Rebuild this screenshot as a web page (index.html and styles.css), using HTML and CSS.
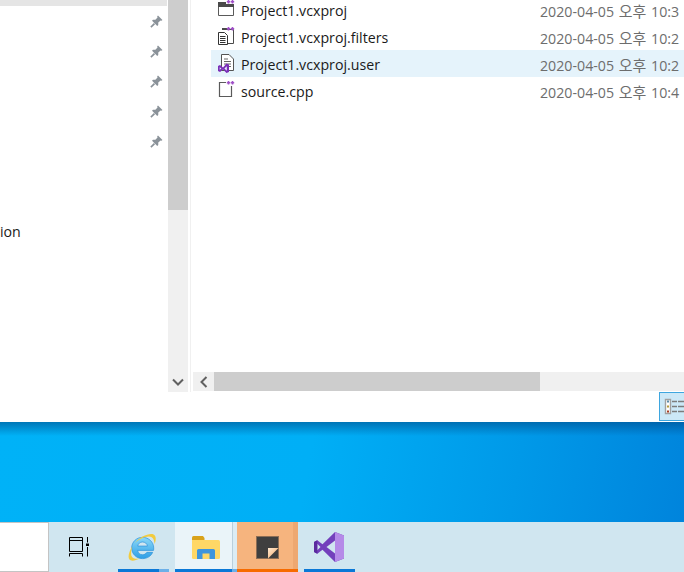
FILE: index.html
```
<!DOCTYPE html>
<html lang="ko">
<head>
<meta charset="utf-8">
<title>Explorer</title>
<link rel="stylesheet" href="styles.css">
</head>
<body>
<svg class="defs" width="0" height="0" aria-hidden="true">
  <defs>
    <symbol id="pin" viewBox="0 0 14 14">
      <path d="M8.6 .6 13.4 5.4 12.4 6.3 11.4 5.9 8.9 8.2 8.9 10.8 7.8 11.8 2.2 6.2 3.2 5.1 5.8 5.1 8.1 2.6 7.7 1.5Z" fill="#8a9299"/>
      <path d="M4.8 9.2 1 13" stroke="#8a9299" stroke-width="1.8"/>
    </symbol>
    <symbol id="plus" viewBox="0 0 18 19">
      <path d="M11.500 0V3.500M9.800 1.700H13.200M15.500 0V3.500M13.800 1.700H17.200" stroke="#a050c8" stroke-width="1.600" fill="none"/>
    </symbol>
  </defs>
</svg>
<div class="window">
  <div class="main">
    <aside class="nav">
      <div class="nav-list">
        <div class="nav-selected"></div>
        <div class="pin-row"><svg class="pin"><use href="#pin"/></svg></div>
        <div class="pin-row"><svg class="pin"><use href="#pin"/></svg></div>
        <div class="pin-row"><svg class="pin"><use href="#pin"/></svg></div>
        <div class="pin-row"><svg class="pin"><use href="#pin"/></svg></div>
        <div class="pin-row"><svg class="pin"><use href="#pin"/></svg></div>
        <div class="nav-text">ion</div>
      </div>
      <div class="vscroll">
        <div class="vthumb"></div>
        <div class="vbtn">
          <svg width="12" height="8" viewBox="0 0 12 8"><path d="M1 1.500 6 6.500 11 1.500" fill="none" stroke="#606060" stroke-width="2"/></svg>
        </div>
      </div>
    </aside>
    <section class="content">
      <div class="files">
        <div class="row">
          <svg class="ficon" viewBox="0 0 18 19">
            <path d="M1.500 5.500H16.500V15.500H1.500Z" fill="#fff" stroke="#5a5a5a"/>
            <path d="M1 2H9V4H17V7H1Z" fill="#4a4a4a"/>
            <use href="#plus"/>
          </svg>
          <span class="fname">Project1.vcxproj</span>
          <span class="fdate">2020-04-05 <span class="ko">오후</span> 10:3</span>
        </div>
        <div class="row">
          <svg class="ficon" viewBox="0 0 18 19">
            <path d="M5.500 2.500H16.500V16.500H11" fill="#fff" stroke="#4a4a4a"/>
            <path d="M5 1H10V3H5Z" fill="#4a4a4a"/>
            <path d="M1.500 5.500H7.500L10.500 8.500V17.500H1.500Z" fill="#fff" stroke="#333"/>
            <path d="M3 9.500H8.500M3 11.500H8.500M3 13.500H8.500M3 15.500H8.500" stroke="#333"/>
            <use href="#plus"/>
          </svg>
          <span class="fname">Project1.vcxproj.filters</span>
          <span class="fdate">2020-04-05 <span class="ko">오후</span> 10:2</span>
        </div>
        <div class="row row-hover">
          <svg class="ficon" viewBox="0 0 18 19">
            <path d="M4.500 .5H12L16.500 5V16.500H4.500Z" fill="#fff" stroke="#555"/>
            <path d="M7 5H11M7 7.500H14M7 10H14M9 12.500H14" stroke="#666"/>
            <path d="M1 12 3 11 6 13.500 9.500 9.500 12 10.500V18L9.500 19 6 15.500 3 18 1 17Z" fill="#7a2fb8"/>
            <path d="M2.700 13.200V15.800L4.400 14.500ZM9.800 12.300 7.400 14.500 9.800 16.700Z" fill="#e5f3fb"/>
          </svg>
          <span class="fname">Project1.vcxproj.user</span>
          <span class="fdate">2020-04-05 <span class="ko">오후</span> 10:2</span>
        </div>
        <div class="row">
          <svg class="ficon" viewBox="0 0 18 19">
            <path d="M9 1.500H2.500V15.500H14.500V5" fill="#fff" stroke="#5a5a5a" stroke-width="1.200"/>
            <use href="#plus"/>
          </svg>
          <span class="fname">source.cpp</span>
          <span class="fdate">2020-04-05 <span class="ko">오후</span> 10:4</span>
        </div>
      </div>
      <div class="hscroll">
        <div class="hbtn">
          <svg width="8" height="12" viewBox="0 0 8 12"><path d="M6.500 1 1.500 6 6.500 11" fill="none" stroke="#606060" stroke-width="2"/></svg>
        </div>
        <div class="hthumb"></div>
      </div>
    </section>
  </div>
  <div class="status">
    <div class="viewbtn">
      <svg width="25" height="17" viewBox="0 0 25 17">
        <path d="M1.500 1.500H6.500V15.500H1.500Z" fill="#fff" stroke="#a0a0a0" stroke-width="1.400"/>
        <path d="M3 2.500H5V4.500H3Z" fill="#5a8aa8"/>
        <path d="M3 7.500H5V9.500H3Z" fill="#b49a3c"/>
        <path d="M3 12.500H5V14.500H3Z" fill="#a83a22"/>
        <path d="M8 3.500H13M14 3.500H20M8 8.500H13M14 8.500H20M8 13.500H13M14 13.500H20" stroke="#7c7c7c" stroke-width="1.300"/>
      </svg>
    </div>
  </div>
</div>
<div class="desktop"></div>
<footer class="taskbar">
  <div class="search"></div>
  <div class="tb-item tb-view">
    <div class="tb-icon">
      <svg width="21" height="20" viewBox="0 0 21 20">
        <path d="M.5 .5H13.500M.5 .5V4M13.500 .5V4M.5 3.500H13.500V14.500H.5V3.500M.5 16.500H13.500M.5 16.500V19.500M13.500 16.500V19.500M18.500 0V5.500M18.500 10V19.500" fill="none" stroke="#000"/>
        <rect x="17" y="6.500" width="3" height="2.500" fill="#000"/>
      </svg>
    </div>
  </div>
  <div class="tb-item tb-ie">
    <div class="tb-icon">
      <svg width="29" height="29" viewBox="0 0 30 30">
        <defs>
          <linearGradient id="ieg" x1="0" y1="0" x2="0" y2="1">
            <stop offset="0" stop-color="#8ad8f8"/>
            <stop offset="1" stop-color="#2f9fe6"/>
          </linearGradient>
        </defs>
        <path d="M15 4.500C8.800 4.500 3.800 9.300 3.800 15.500S8.800 26.500 15 26.500C19.800 26.500 23.800 24 25.500 20H19.500C18.400 21.800 16.800 22.500 15 22.500 12.300 22.500 10.300 20.700 10 18H26.400C26.600 17 26.600 16.300 26.600 15.500 26.600 9.300 21.300 4.500 15 4.500ZM10.100 13.500C10.500 10.900 12.400 9.300 15 9.300S19.700 10.900 20.100 13.500Z" fill="url(#ieg)" stroke="#2a90d8" stroke-width=".7"/>
        <path d="M7 10.500C12 4 22 -.5 26.500 1.500 29.500 3 29 8 27.500 11.500 27.300 6.500 25.500 3.500 21.500 3.500 17 3.500 11 6.500 7 10.500ZM4.500 13.500C1 19.500 -.5 25 1.500 27.500 3.500 29.500 8 28.500 12 26.500 8.500 27 4.500 26.500 3.500 23.500 2.800 20.500 3.500 17 4.500 13.500Z" fill="#f2cb3f"/>
      </svg>
    </div>
    <div class="tb-bar tb-bar-ie"></div>
  </div>
  <div class="tb-item tb-folder">
    <div class="tb-icon">
      <svg width="28" height="23" viewBox="0 0 28 23">
        <path d="M0 1.500Q0 0 1.500 0H11L12.500 2V5H0Z" fill="#d9a21b"/>
        <path d="M0 4H26.500Q28 4 28 5.500V21.500Q28 23 26.500 23H1.500Q0 23 0 21.500Z" fill="#ffd766"/>
        <path d="M5 23V14.500Q5 13 6.500 13H21.500Q23 13 23 14.500V23H17.500V17.500H10.500V23Z" fill="#3f95dc"/>
      </svg>
    </div>
    <div class="tb-bar tb-bar-folder"></div>
  </div>
  <div class="tb-item tb-sticky">
    <div class="tb-icon">
      <svg width="23" height="23" viewBox="0 0 23 23">
        <defs>
          <linearGradient id="stg" x1="0" y1="0" x2="1" y2="1">
            <stop offset="0" stop-color="#fde9d2"/>
            <stop offset="1" stop-color="#f6a866"/>
          </linearGradient>
        </defs>
        <rect x=".5" y=".5" width="22" height="22" fill="#3f3f3f" stroke="#8c6d55"/>
        <path d="M12 12H22.500L12 22.500Z" fill="url(#stg)"/>
      </svg>
    </div>
    <div class="tb-bar tb-bar-sticky"></div>
  </div>
  <div class="tb-item tb-vs">
    <div class="tb-icon">
      <svg width="30" height="30" viewBox="0 0 30 30">
        <path d="M21 0 30 3.500V26.500L21 30 8.500 17.800 3.300 21.700 0 20V10L3.300 8.300 8.500 12.200Z" fill="#7340bc"/>
        <path d="M21 0 30 3.500V26.500L21 30Z" fill="#b58ae8"/>
        <path d="M21 8.500 12.500 15 21 21.500Z" fill="#d0e6f0"/>
        <path d="M3.300 11.800V18.200L6.500 15Z" fill="#d0e6f0"/>
        <path d="M0 10 3.300 8.300V21.700L0 20Z" fill="#5b2a9e"/>
      </svg>
    </div>
    <div class="tb-bar tb-bar-vs"></div>
  </div>
</footer>
</body>
</html>
```
FILE: styles.css
```
html, body {
  margin: 0;
  padding: 0;
}
body {
  width: 684px;
  height: 572px;
  overflow: hidden;
  background: #fff;
  font-family: "Open Sans", "Noto Sans CJK KR", sans-serif;
}
.defs {
  display: block;
  height: 0;
}
.window {
  height: 422px;
  display: flex;
  flex-direction: column;
  background: #fff;
}
.main {
  height: 392px;
  flex: none;
  display: flex;
}
.nav {
  width: 191px;
  flex: none;
  box-sizing: border-box;
  display: flex;
  border-right: 1px solid #f0f0f0;
}
.nav-list {
  width: 168px;
  flex: none;
}
.nav-selected {
  width: 167px;
  height: 6px;
  background: #e5e5e5;
}
.pin-row {
  height: 30px;
  display: flex;
  align-items: center;
  justify-content: flex-end;
  padding-right: 5px;
}
.pin {
  width: 13px;
  height: 13px;
}
.pin-row:first-of-type {
  margin-top: 1px;
}
.nav-text {
  margin-top: 66px;
  height: 20px;
  font-size: 14.2px;
  line-height: 20px;
  color: #1a1a1a;
}
.vscroll {
  width: 20px;
  flex: none;
  display: flex;
  flex-direction: column;
  justify-content: space-between;
  background: #f0f0f0;
}
.vthumb {
  height: 210px;
  background: #cdcdcd;
}
.vbtn {
  height: 20px;
  display: flex;
  align-items: center;
  justify-content: center;
}
.content {
  flex: 1;
  min-width: 0;
  display: flex;
  flex-direction: column;
  padding: 0 0 1px 2px;
}
.files {
  flex: 1;
  min-height: 0;
  overflow: hidden;
  padding-left: 18px;
}
.row {
  height: 27px;
  display: flex;
  align-items: center;
  white-space: nowrap;
}
.row:first-child {
  margin-top: -4px;
}
.row-hover {
  background: #e5f3fb;
}
.ficon {
  margin-left: 6px;
  width: 18px;
  height: 19px;
  flex: none;
  overflow: visible;
}
.fname {
  margin-left: 6px;
  padding-top: 2px;
  width: 299px;
  flex: none;
  font-size: 14.2px;
  color: #1a1a1a;
}
.fdate {
  padding-top: 2px;
  font-size: 14.2px;
  word-spacing: 1px;
  color: #6d6d6d;
}
.ko {
  font-size: 15px;
}
.hscroll {
  height: 19px;
  flex: none;
  display: flex;
  background: #f0f0f0;
}
.hbtn {
  width: 21px;
  display: flex;
  align-items: center;
  justify-content: center;
}
.hthumb {
  width: 326px;
  background: #cdcdcd;
}
.status {
  flex: 1;
  display: flex;
  justify-content: flex-end;
}
.viewbtn {
  width: 25px;
  margin-bottom: 1px;
  box-sizing: border-box;
  background: #cce8f7;
  border: 1px solid #3ea6df;
  border-right: 0;
  display: flex;
  align-items: center;
  padding-left: 4px;
  overflow: hidden;
}
.viewbtn svg {
  flex: none;
}
.desktop {
  height: 100px;
  background:
    linear-gradient(180deg, rgba(0, 70, 130, .55) 0, rgba(0, 70, 130, 0) 14px),
    linear-gradient(100deg, #00b2f7 0, #00aff6 45%, #0099e8 75%, #0084dc 100%);
}
.taskbar {
  height: 50px;
  display: flex;
  background: #d0e6f0;
}
.search {
  width: 49px;
  box-sizing: border-box;
  background: #fff;
  border: 1px solid #c4c4c4;
  border-width: 1px 1px 1px 0;
  flex: none;
}
.tb-item {
  flex: none;
  display: flex;
  flex-direction: column;
  box-sizing: border-box;
  height: 50px;
}
.tb-icon {
  height: 47px;
  flex: none;
  display: flex;
  align-items: center;
  justify-content: center;
  padding-top: 3px;
  box-sizing: border-box;
}
.tb-bar {
  height: 3px;
  flex: none;
}
.tb-view {
  width: 61px;
  padding-left: 0;
}
.tb-ie {
  width: 65px;
}
.tb-folder {
  width: 62px;
  background: linear-gradient(90deg, #eaf4f9 0, #eaf4f9 57px, #b9cfdb 57px, #b9cfdb 58px, #dbecf4 58px);
}
.tb-sticky {
  width: 61px;
  background: linear-gradient(90deg, #f6b47e 0, #f6b47e 56px, #eea871 56px);
}
.tb-vs {
  width: 62px;
}
.tb-bar-ie {
  margin: 0 6px 0 8px;
  background: linear-gradient(90deg, #0a78d7 0, #0a78d7 41px, #6cb0e8 41px);
}
.tb-bar-folder {
  background: linear-gradient(90deg, #0a78d7 0, #0a78d7 57px, #6cb0e8 57px);
}
.tb-bar-sticky {
  background: #f76b00;
}
.tb-bar-vs {
  margin: 0 5px 0 6px;
  background: #0a78d7;
}
```
